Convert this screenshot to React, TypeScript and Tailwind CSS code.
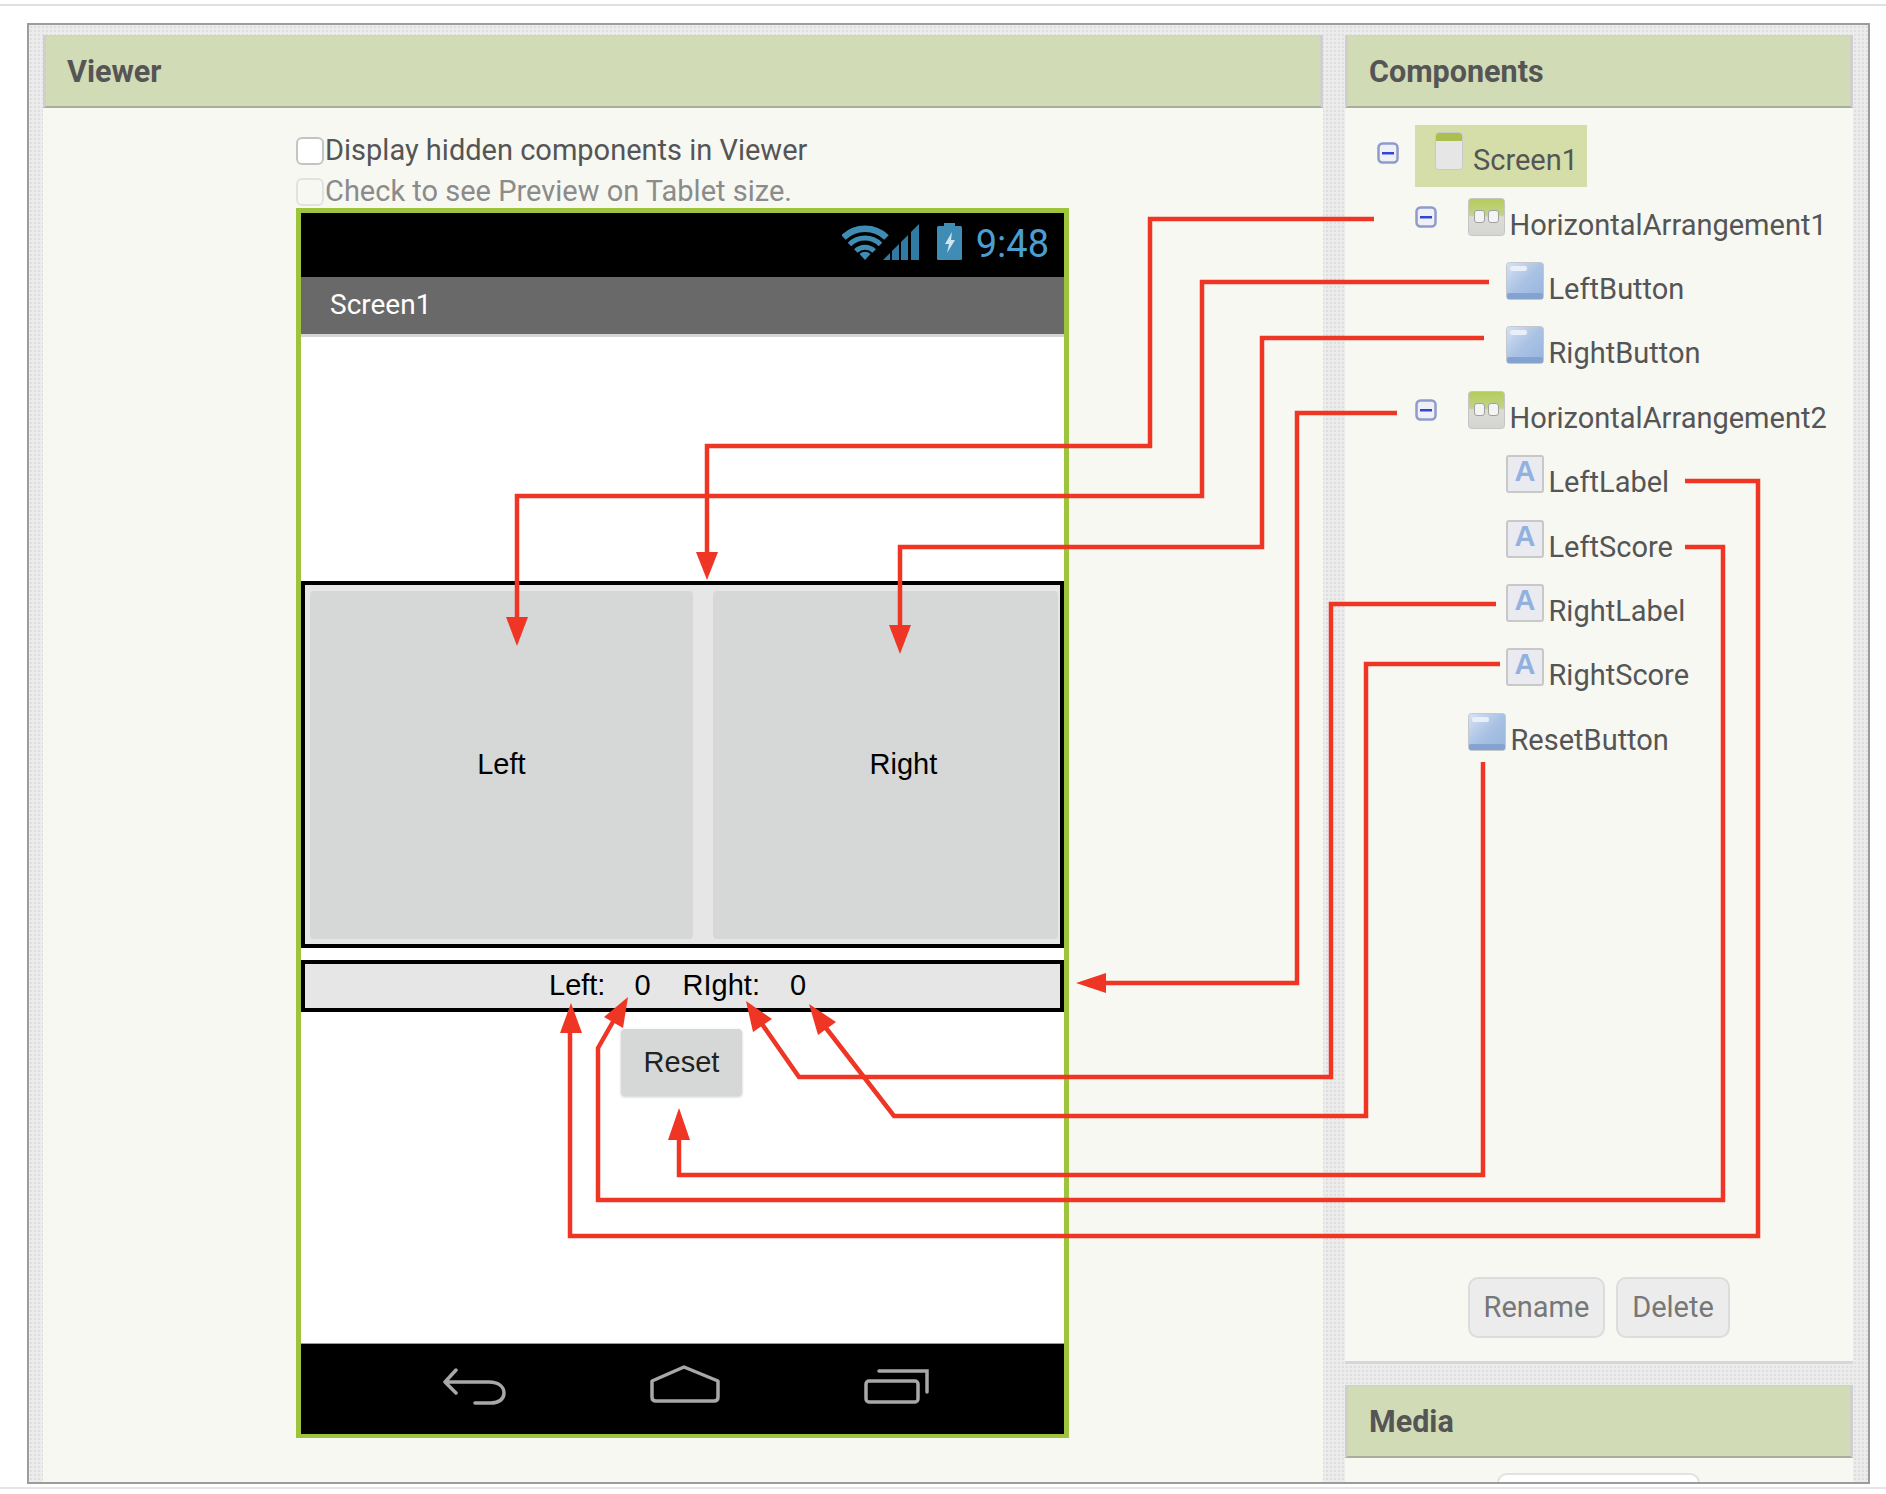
const texture =
  "bg-[#ececec] bg-[radial-gradient(#dedede_1px,transparent_1px)] bg-[length:4px_4px]";

const MinusBox = () => (
  <svg width="22" height="22" viewBox="0 0 22 22" className="shrink-0">
    <rect x="1.5" y="1.5" width="19" height="19" rx="4" fill="#eef0f6" stroke="#8f9ccb" strokeWidth="2.5" />
    <rect x="5" y="10" width="12" height="2.5" fill="#3146d0" />
  </svg>
);

const ScreenIcon = () => (
  <svg width="28" height="38" viewBox="0 0 28 38" className="shrink-0">
    <rect x="0.5" y="0.5" width="27" height="37" rx="3" fill="#e6e6e6" stroke="#c8c8c8" />
    <path d="M1 9V4a3 3 0 0 1 3-3h20a3 3 0 0 1 3 3v5z" fill="#a9c04e" />
  </svg>
);

const ArrangementIcon = () => (
  <svg width="37" height="38" viewBox="0 0 37 38" className="shrink-0">
    <defs>
      <linearGradient id="arr" x1="0" y1="0" x2="0" y2="1">
        <stop offset="0" stopColor="#b4cd58" />
        <stop offset="0.45" stopColor="#c3d28a" />
        <stop offset="0.5" stopColor="#dcdcd6" />
        <stop offset="1" stopColor="#d4d4d4" />
      </linearGradient>
    </defs>
    <rect x="0.5" y="0.5" width="36" height="37" rx="3" fill="url(#arr)" stroke="#c6c6c6" />
    <rect x="6.5" y="12.5" width="10" height="12" rx="2.5" fill="#f4f4f4" stroke="#a0a0a0" />
    <rect x="20.5" y="12.5" width="10" height="12" rx="2.5" fill="#f4f4f4" stroke="#a0a0a0" />
  </svg>
);

const ButtonIcon = () => (
  <svg width="38" height="38" viewBox="0 0 38 38" className="shrink-0">
    <defs>
      <linearGradient id="btn" x1="0" y1="0" x2="1" y2="1">
        <stop offset="0" stopColor="#d8e3f3" />
        <stop offset="0.5" stopColor="#a9c2e4" />
        <stop offset="1" stopColor="#98b4dc" />
      </linearGradient>
    </defs>
    <rect x="0.5" y="0.5" width="37" height="37" rx="3" fill="url(#btn)" stroke="#c4c8cc" />
    <rect x="1" y="31" width="36" height="6" rx="2" fill="#85a3d0" />
    <rect x="4" y="4" width="17" height="5" rx="2" fill="#e8eff8" />
  </svg>
);

const LabelIcon = () => (
  <div className="w-[38px] h-[38px] shrink-0 rounded-[3px] border-2 border-[#c8c8c8] bg-[#e9ebf1] flex justify-center font-['Liberation_Sans',sans-serif] font-bold text-[29px] leading-[29px] text-[#93b1de]">
    A
  </div>
);

const treeRows = [
  { name: "HorizontalArrangement1", pad: "pl-[70px]", minus: true, icon: <ArrangementIcon /> },
  { name: "LeftButton", pad: "pl-[161px]", minus: false, icon: <ButtonIcon /> },
  { name: "RightButton", pad: "pl-[161px]", minus: false, icon: <ButtonIcon /> },
  { name: "HorizontalArrangement2", pad: "pl-[70px]", minus: true, icon: <ArrangementIcon /> },
  { name: "LeftLabel", pad: "pl-[161px]", minus: false, icon: <LabelIcon /> },
  { name: "LeftScore", pad: "pl-[161px]", minus: false, icon: <LabelIcon /> },
  { name: "RightLabel", pad: "pl-[161px]", minus: false, icon: <LabelIcon /> },
  { name: "RightScore", pad: "pl-[161px]", minus: false, icon: <LabelIcon /> },
  { name: "ResetButton", pad: "pl-[123px]", minus: false, icon: <ButtonIcon /> },
];

const TreeRow = ({ name, pad, minus, icon }: (typeof treeRows)[number]) => (
  <div className={`flex h-[64.4px] ${pad}`}>
    {minus && (
      <div className="w-[53px] pt-[15px]">
        <MinusBox />
      </div>
    )}
    <div className="pt-[7px]">{icon}</div>
    <span className="ml-[4.5px] mt-[16px] text-[29px] leading-[36px] text-[#555] whitespace-nowrap">{name}</span>
  </div>
);

const PanelHeader = ({ title }: { title: string }) => (
  <div className="h-[73px] shrink-0 border-x-[3px] border-t border-b-2 border-x-[#cfcfcf] border-t-[#cfcfcf] border-b-[#a9ad9b] bg-[#d1dbb5] pl-[21px] pt-[2px] flex items-center text-[30.5px] font-bold text-[#555]">
    {title}
  </div>
);

const StatusIcons = () => (
  <svg width="77" height="37" viewBox="0 0 77 37" className="shrink-0">
    <g fill="none" stroke="#3f8cb5">
      <path d="M1.5 14.5A31 31 0 0 1 44.5 14.5" strokeWidth="6.5" />
      <path d="M7.5 21.5A22 22 0 0 1 38.5 21.5" strokeWidth="5" />
      <path d="M13.8 28A13 13 0 0 1 32.2 28" strokeWidth="5" />
    </g>
    <path d="M23 37L17.5 31A8 8 0 0 1 28.5 31z" fill="#3f8cb5" />
    <g fill="#2f7ba3">
      <polygon points="41,37 48,30 48,37" />
      <polygon points="50,28 57,21 57,37 50,37" />
      <polygon points="59,19 66,12 66,37 59,37" />
      <polygon points="69,9 77,1 77,37 69,37" />
    </g>
  </svg>
);

const BatteryIcon = () => (
  <svg width="25" height="37" viewBox="0 0 25 37" className="shrink-0">
    <rect x="7" y="0" width="11" height="4" fill="#3f8cb5" />
    <rect x="0" y="3" width="25" height="34" rx="1.5" fill="#3f8cb5" />
    <path d="M15 9L8 21h4l-2 9 8-13h-4z" fill="#cfe4ee" />
  </svg>
);

const Checkbox = ({ faded }: { faded?: boolean }) => (
  <span
    className={`w-[28px] h-[28px] shrink-0 rounded-[6px] border-2 ${
      faded ? "border-[#e2e2e2] bg-[#f7f8f2]" : "border-[#c4c4c4] bg-white"
    }`}
  />
);

const Phone = () => (
  <div className="w-[773px] h-[1230px] border-[5px] border-b-[4px] border-[#9dc43c] flex flex-col bg-white font-['Liberation_Sans',sans-serif] text-[29px] text-black">
    <div className="h-[64px] shrink-0 bg-black flex items-center justify-end pr-[15px] pb-[7px]">
      <StatusIcons />
      <div className="ml-[18px]">
        <BatteryIcon />
      </div>
      <span className="ml-[14px] mt-[4px] font-[Roboto,sans-serif] text-[38px] text-[#4a9fd0] leading-none">9:48</span>
    </div>
    <div className="h-[60px] shrink-0 bg-[#696969] border-b-[3px] border-[#d4d4d4] pl-[29px] pb-[2px] flex items-center font-[Roboto,sans-serif] text-[28px] text-white">
      Screen1
    </div>
    <div className="h-[244px] shrink-0" />
    <div className="h-[367px] shrink-0 border-[4px] border-black bg-[#e6e6e6] flex gap-[20px] pl-[5px] pr-[2px] pt-[6px] pb-[5px]">
      <div className="w-[385px] bg-[#d6d8d7] rounded-[4px] flex items-center justify-center">Left</div>
      <div className="w-[347px] bg-[#d6d8d7] rounded-[4px] flex items-center justify-center pl-[36px]">Right</div>
    </div>
    <div className="mt-[12px] h-[52px] shrink-0 border-[4px] border-black bg-[#e6e6e6] flex items-center pl-[244px]">
      <span>Left:</span>
      <span className="ml-[29px]">0</span>
      <span className="ml-[32px]">RIght:</span>
      <span className="ml-[30px]">0</span>
    </div>
    <div className="mt-[17px] ml-[320px] w-[121px] h-[67px] shrink-0 rounded-[4px] bg-[#d6d8d7] shadow-[0_1px_3px_rgba(0,0,0,0.2)] flex items-center justify-center text-[#222]">
      Reset
    </div>
    <div className="flex-1" />
    <div className="h-[91px] shrink-0 bg-black border-t border-[#9a9a9a] flex items-start pt-[21px] pl-[142px] gap-[144px]">
      <svg width="63" height="37" viewBox="0 0 63 37" fill="none" stroke="#a8a8a8" strokeWidth="3.5" strokeLinecap="round" strokeLinejoin="round" className="shrink-0 mt-[3px]">
        <path d="M13 2L2 14L13 25M2 14H46C56 14 61 19 61 25C61 31 56 35 48 35H32" />
      </svg>
      <svg width="70" height="38" viewBox="0 0 70 38" fill="none" stroke="#a8a8a8" strokeWidth="3.5" strokeLinejoin="round" className="shrink-0">
        <path d="M34 2L2 16V32Q2 36 6 36H64Q68 36 68 32V16Z" />
      </svg>
      <svg width="65" height="36" viewBox="0 0 65 36" fill="none" stroke="#a8a8a8" strokeWidth="3.5" strokeLinecap="round" className="shrink-0 mt-[3px]">
        <rect x="2" y="13" width="52" height="21" rx="3" />
        <path d="M15 3H63V24" />
      </svg>
    </div>
  </div>
);

const Arrows = () => (
  <svg width="1886" height="1494" viewBox="0 0 1886 1494" className="absolute left-0 top-0 pointer-events-none">
    <g fill="none" stroke="#ef3524" strokeWidth="4.5">
      <polyline points="1374,219 1150,219 1150,446 707,446 707,555" />
      <polyline points="1489,282 1202,282 1202,496 517,496 517,620" />
      <polyline points="1484,338 1262,338 1262,547 900,547 900,628" />
      <polyline points="1397,413 1297,413 1297,983 1104,983" />
      <polyline points="1685,481 1758,481 1758,1236 570,1236 570,1030" />
      <polyline points="1685,547 1723,547 1723,1200 598,1200 598,1048 614,1020" />
      <polyline points="1496,604 1331,604 1331,1077 799,1077 762,1024" />
      <polyline points="1500,664 1366,664 1366,1116 894,1116 826,1028" />
      <polyline points="1483,762 1483,1175 679,1175 679,1138" />
    </g>
    <g fill="#ef3524">
      <polygon points="707,580 696,552 718,552" />
      <polygon points="517,646 506,617 528,617" />
      <polygon points="900,654 889,625 911,625" />
      <polygon points="1076,983 1106,973 1106,993" />
      <polygon points="571,1003 560,1033 582,1033" />
      <polygon points="628,997 604,1017 623,1028" />
      <polygon points="746,1001 753,1032 772,1019" />
      <polygon points="809,1004 818,1035 836,1022" />
      <polygon points="679,1108 668,1140 690,1140" />
    </g>
  </svg>
);

export default function App() {
  return (
    <div className="relative h-[1494px] overflow-hidden bg-white pt-[4px] font-[Roboto,sans-serif]">
      <div className="h-[2px] bg-[#e0e0e0]" />
      <div className={`mt-[17px] ml-[27px] w-[1843px] h-[1461px] border-2 border-[#9c9c9c] overflow-hidden flex gap-[22px] pt-[10px] pl-[14px] ${texture}`}>
        <div className="w-[1280px] h-[1447px] flex flex-col shrink-0">
          <PanelHeader title="Viewer" />
          <div className="flex-1 bg-[#f7f8f2] pl-[253px] pt-[29px]">
            <div className="flex items-center h-[28px] text-[29px] text-[#555]">
              <Checkbox />
              <span className="ml-[1px]">Display hidden components in Viewer</span>
            </div>
            <div className="flex items-center h-[28px] mt-[13px] text-[29px] text-[#8b8b8b]">
              <Checkbox faded />
              <span className="ml-[1px]">Check to see Preview on Tablet size.</span>
            </div>
            <div className="mt-[2px]">
              <Phone />
            </div>
          </div>
        </div>
        <div className="w-[508px] h-[1447px] shrink-0 flex flex-col">
          <div className="h-[1329px] shrink-0 flex flex-col">
            <PanelHeader title="Components" />
            <div className="flex-1 bg-[#f7f8f2] border-b-[3px] border-[#d6d6d6] pt-[17px] flex flex-col">
              <div className="flex h-[62px] pl-[32px] mb-[3.6px]">
                <div className="pt-[17px]">
                  <MinusBox />
                </div>
                <div className="ml-[16px] w-[172px] bg-[#d5dea8] flex pl-[20px]">
                  <div className="pt-[7px]">
                    <ScreenIcon />
                  </div>
                  <span className="ml-[10px] mt-[17px] text-[29px] leading-[36px] text-[#555]">Screen1</span>
                </div>
              </div>
              {treeRows.map((row) => (
                <TreeRow key={row.name} {...row} />
              ))}
              <div className="mt-auto mb-[23px] pl-[123px] flex gap-[11px] text-[29px] text-[#777]">
                <div className="w-[137px] h-[61px] rounded-[10px] border-2 border-[#dcdcdc] bg-[#ececec] flex items-center justify-center">Rename</div>
                <div className="w-[114px] h-[61px] rounded-[10px] border-2 border-[#dcdcdc] bg-[#ececec] flex items-center justify-center">Delete</div>
              </div>
            </div>
          </div>
          <div className="mt-[21px] flex-1 flex flex-col">
            <PanelHeader title="Media" />
            <div className="flex-1 bg-[#f7f8f2] pt-[15px] pl-[152px]">
              <div className="w-[203px] h-[40px] rounded-t-[10px] border-2 border-[#e2e2e2] bg-white" />
            </div>
          </div>
        </div>
      </div>
      <div className="mt-[3px] h-[2px] bg-[#e5e5e5]" />
      <Arrows />
    </div>
  );
}
